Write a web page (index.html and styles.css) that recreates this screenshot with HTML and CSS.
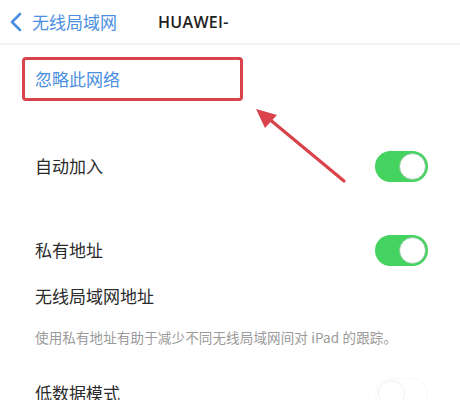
FILE: index.html
```html
<!DOCTYPE html>
<html lang="zh-CN">
<head>
<meta charset="utf-8">
<link rel="stylesheet" href="styles.css">
</head>
<body>
<div class="page">
  <header class="nav">
    <div class="back">
      <svg class="chev" width="14" height="20" viewBox="0 0 14 20"><path d="M11 2 L3 10 L11 18" fill="none" stroke="#4a8fe0" stroke-width="2.6" stroke-linecap="round" stroke-linejoin="round"/></svg>
      <span class="back-text">无线局域网</span>
    </div>
    <div class="title">HUAWEI-</div>
  </header>

  <div class="ignore"><span>忽略此网络</span></div>

  <div class="row row-auto">
    <span class="label">自动加入</span>
    <span class="toggle on"><span class="knob"></span></span>
  </div>

  <div class="row row-private">
    <span class="label">私有地址</span>
    <span class="toggle on"><span class="knob"></span></span>
  </div>

  <div class="addr">无线局域网地址</div>
  <div class="note">使用私有地址有助于减少不同无线局域网间对 iPad 的跟踪。</div>

  <div class="row row-low">
    <span class="label">低数据模式</span>
    <span class="toggle off"><span class="knob"></span></span>
  </div>

  <svg class="arrow" width="460" height="400" viewBox="0 0 460 400">
    <line x1="344" y1="181" x2="268" y2="118" stroke="#d9434b" stroke-width="3.2" stroke-linecap="round"/>
    <polygon points="256,109 277,115 265,128" fill="#d9434b"/>
  </svg>
</div>
</body>
</html>
```

FILE: styles.css
```css
html, body {
  margin: 0;
  padding: 0;
  background: #ffffff;
}
body {
  font-family: "Noto Sans CJK SC", "Noto Sans", sans-serif;
  color: #2a2a2a;
  width: 460px;
  height: 400px;
  overflow: hidden;
}
.page {
  position: relative;
  width: 460px;
  height: 400px;
}
.nav {
  height: 43px;
  display: flex;
  align-items: center;
  border-bottom: 2px solid #f1f1f1;
}
.back {
  display: flex;
  align-items: center;
  padding-left: 9px;
  width: 149px;
}
.chev {
  display: block;
  margin-right: 9px;
}
.back-text {
  color: #4a8fe0;
  font-size: 17px;
  line-height: 20px;
}
.title {
  font-family: "Open Sans", "Noto Sans", sans-serif;
  font-size: 16px;
  font-weight: 600;
  color: #1e1e1e;
  letter-spacing: 0.3px;
}
.ignore {
  margin: 12px 0 0 22px;
  width: 221px;
  height: 44px;
  box-sizing: border-box;
  border: 3px solid #d8434c;
  border-radius: 4px;
  display: flex;
  align-items: center;
  padding-left: 10px;
}
.ignore span {
  color: #4a8fe0;
  font-size: 17px;
  line-height: 20px;
}
.row {
  display: flex;
  align-items: center;
  justify-content: space-between;
  padding: 0 32px 0 35px;
  height: 40px;
}
.row-auto {
  margin-top: 45px;
}
.row-private {
  margin-top: 44px;
}
.row-low {
  margin-top: 27px;
}
.label {
  font-size: 17px;
  line-height: 20px;
  color: #2a2a2a;
}
.toggle {
  width: 53px;
  height: 31px;
  border-radius: 16px;
  box-sizing: border-box;
  display: flex;
  align-items: center;
  padding: 2px;
}
.toggle.on {
  background: #44d35e;
  justify-content: flex-end;
}
.toggle.off {
  background: #ffffff;
  border: 1px solid #f8f8f8;
  justify-content: flex-start;
}
.knob {
  width: 27px;
  height: 27px;
  border-radius: 50%;
  background: #ffffff;
  box-sizing: border-box;
  border: 1px solid #8ac79a;
}
.toggle.off .knob {
  border: 1px solid #f0f0f0;
}
.addr {
  margin-top: 14px;
  padding-left: 35px;
  font-size: 17px;
  line-height: 24px;
  color: #2a2a2a;
}
.note {
  margin-top: 20px;
  padding-left: 35px;
  font-size: 13.5px;
  line-height: 18px;
  letter-spacing: 0.15px;
  color: #9a9a9a;
}
.arrow {
  position: absolute;
  left: 0;
  top: 0;
  pointer-events: none;
}
```
